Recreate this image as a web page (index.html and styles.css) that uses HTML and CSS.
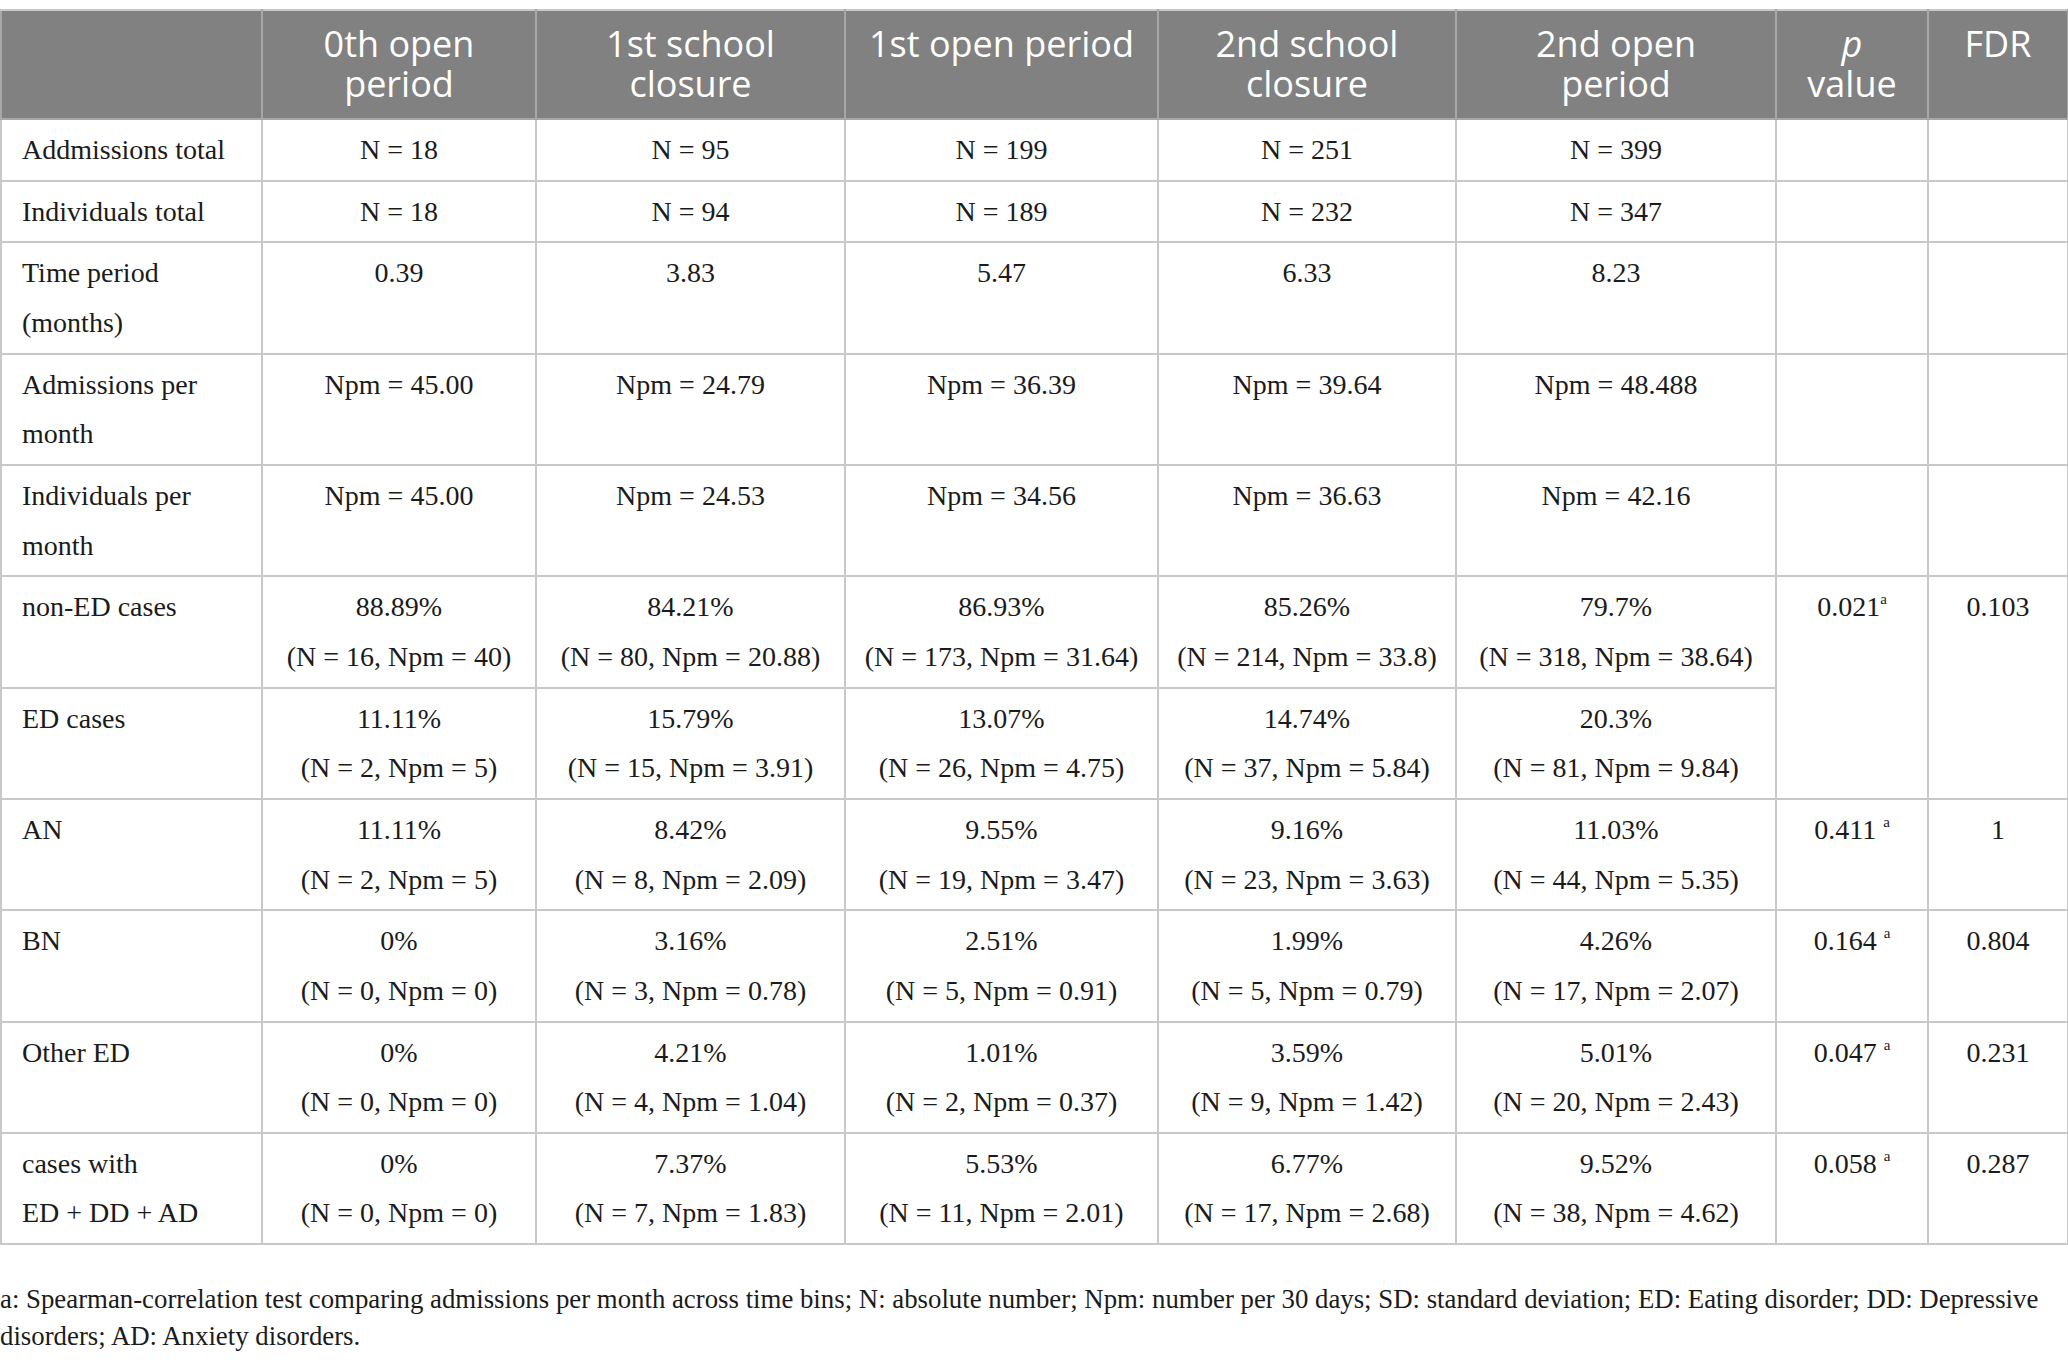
FILE: index.html
```html
<!DOCTYPE html>
<html lang="en">
<head>
<meta charset="utf-8">
<title>Admissions table</title>
<link rel="stylesheet" href="styles.css">
</head>
<body>
<div class="page">
<table class="data">
  <colgroup>
    <col class="c-label"><col class="c-p0"><col class="c-c1"><col class="c-p1"><col class="c-c2"><col class="c-p2"><col class="c-pv"><col class="c-fdr">
  </colgroup>
  <thead>
    <tr>
      <th></th>
      <th>0th open period</th>
      <th>1st school closure</th>
      <th>1st open period</th>
      <th>2nd school closure</th>
      <th>2nd open period</th>
      <th><i>p</i><br>value</th>
      <th>FDR</th>
    </tr>
  </thead>
  <tbody>
    <tr>
      <td>Addmissions total</td>
      <td>N = 18</td><td>N = 95</td><td>N = 199</td><td>N = 251</td><td>N = 399</td><td></td><td></td>
    </tr>
    <tr>
      <td>Individuals total</td>
      <td>N = 18</td><td>N = 94</td><td>N = 189</td><td>N = 232</td><td>N = 347</td><td></td><td></td>
    </tr>
    <tr>
      <td>Time period<br>(months)</td>
      <td>0.39</td><td>3.83</td><td>5.47</td><td>6.33</td><td>8.23</td><td></td><td></td>
    </tr>
    <tr>
      <td>Admissions per<br>month</td>
      <td>Npm = 45.00</td><td>Npm = 24.79</td><td>Npm = 36.39</td><td>Npm = 39.64</td><td>Npm = 48.488</td><td></td><td></td>
    </tr>
    <tr>
      <td>Individuals per<br>month</td>
      <td>Npm = 45.00</td><td>Npm = 24.53</td><td>Npm = 34.56</td><td>Npm = 36.63</td><td>Npm = 42.16</td><td></td><td></td>
    </tr>
    <tr>
      <td>non-ED cases</td>
      <td>88.89%<br>(N = 16, Npm = 40)</td>
      <td>84.21%<br>(N = 80, Npm = 20.88)</td>
      <td>86.93%<br>(N = 173, Npm = 31.64)</td>
      <td>85.26%<br>(N = 214, Npm = 33.8)</td>
      <td>79.7%<br>(N = 318, Npm = 38.64)</td>
      <td rowspan="2">0.021<sup>a</sup></td>
      <td rowspan="2">0.103</td>
    </tr>
    <tr>
      <td>ED cases</td>
      <td>11.11%<br>(N = 2, Npm = 5)</td>
      <td>15.79%<br>(N = 15, Npm = 3.91)</td>
      <td>13.07%<br>(N = 26, Npm = 4.75)</td>
      <td>14.74%<br>(N = 37, Npm = 5.84)</td>
      <td>20.3%<br>(N = 81, Npm = 9.84)</td>
    </tr>
    <tr>
      <td>AN</td>
      <td>11.11%<br>(N = 2, Npm = 5)</td>
      <td>8.42%<br>(N = 8, Npm = 2.09)</td>
      <td>9.55%<br>(N = 19, Npm = 3.47)</td>
      <td>9.16%<br>(N = 23, Npm = 3.63)</td>
      <td>11.03%<br>(N = 44, Npm = 5.35)</td>
      <td>0.411 <sup>a</sup></td>
      <td>1</td>
    </tr>
    <tr>
      <td>BN</td>
      <td>0%<br>(N = 0, Npm = 0)</td>
      <td>3.16%<br>(N = 3, Npm = 0.78)</td>
      <td>2.51%<br>(N = 5, Npm = 0.91)</td>
      <td>1.99%<br>(N = 5, Npm = 0.79)</td>
      <td>4.26%<br>(N = 17, Npm = 2.07)</td>
      <td>0.164 <sup>a</sup></td>
      <td>0.804</td>
    </tr>
    <tr>
      <td>Other ED</td>
      <td>0%<br>(N = 0, Npm = 0)</td>
      <td>4.21%<br>(N = 4, Npm = 1.04)</td>
      <td>1.01%<br>(N = 2, Npm = 0.37)</td>
      <td>3.59%<br>(N = 9, Npm = 1.42)</td>
      <td>5.01%<br>(N = 20, Npm = 2.43)</td>
      <td>0.047 <sup>a</sup></td>
      <td>0.231</td>
    </tr>
    <tr>
      <td>cases with<br>ED + DD + AD</td>
      <td>0%<br>(N = 0, Npm = 0)</td>
      <td>7.37%<br>(N = 7, Npm = 1.83)</td>
      <td>5.53%<br>(N = 11, Npm = 2.01)</td>
      <td>6.77%<br>(N = 17, Npm = 2.68)</td>
      <td>9.52%<br>(N = 38, Npm = 4.62)</td>
      <td>0.058 <sup>a</sup></td>
      <td>0.287</td>
    </tr>
  </tbody>
</table>
<p class="note">a: Spearman-correlation test comparing admissions per month across time bins; N: absolute number; Npm: number per 30 days; SD: standard deviation; ED: Eating disorder; DD: Depressive disorders; AD: Anxiety disorders.</p>
</div>
</body>
</html>
```

FILE: styles.css
```css
html, body {
  margin: 0;
  padding: 0;
  background: #ffffff;
}

.page {
  padding-top: 9px;
  width: 2068px;
}

.data {
  border-collapse: collapse;
  table-layout: fixed;
  width: 2067px;
  font-family: "Liberation Serif", "Times New Roman", serif;
  font-size: 28px;
  color: #1b1b1b;
}

.c-label { width: 261px; }
.c-p0 { width: 274px; }
.c-c1 { width: 309px; }
.c-p1 { width: 313px; }
.c-c2 { width: 298px; }
.c-p2 { width: 320px; }
.c-pv { width: 152px; }
.c-fdr { width: 140px; }

.data th {
  background: #808180;
  color: #ffffff;
  font-family: "Open Sans", "DejaVu Sans", sans-serif;
  font-weight: 400;
  font-size: 36px;
  line-height: 40px;
  padding: 13px 20px 14px;
  text-align: center;
  vertical-align: top;
  border: 2px solid #a6a7a6;
  border-top-color: #c8c8c8;
}

.data th i {
  font-style: italic;
}

.data td {
  border: 2px solid #c8c8c8;
  line-height: 49.66px;
  padding: 5px 10px 5px;
  text-align: center;
  vertical-align: top;
}

.data td:first-child {
  text-align: left;
  padding-left: 20px;
}

.data sup {
  font-size: 15px;
  line-height: 0;
  vertical-align: 12px;
}

.note {
  margin: 36px 0 0 0;
  font-family: "Liberation Serif", "Times New Roman", serif;
  font-size: 26.8px;
  line-height: 37px;
  color: #1b1b1b;
  width: 2060px;
}
```
